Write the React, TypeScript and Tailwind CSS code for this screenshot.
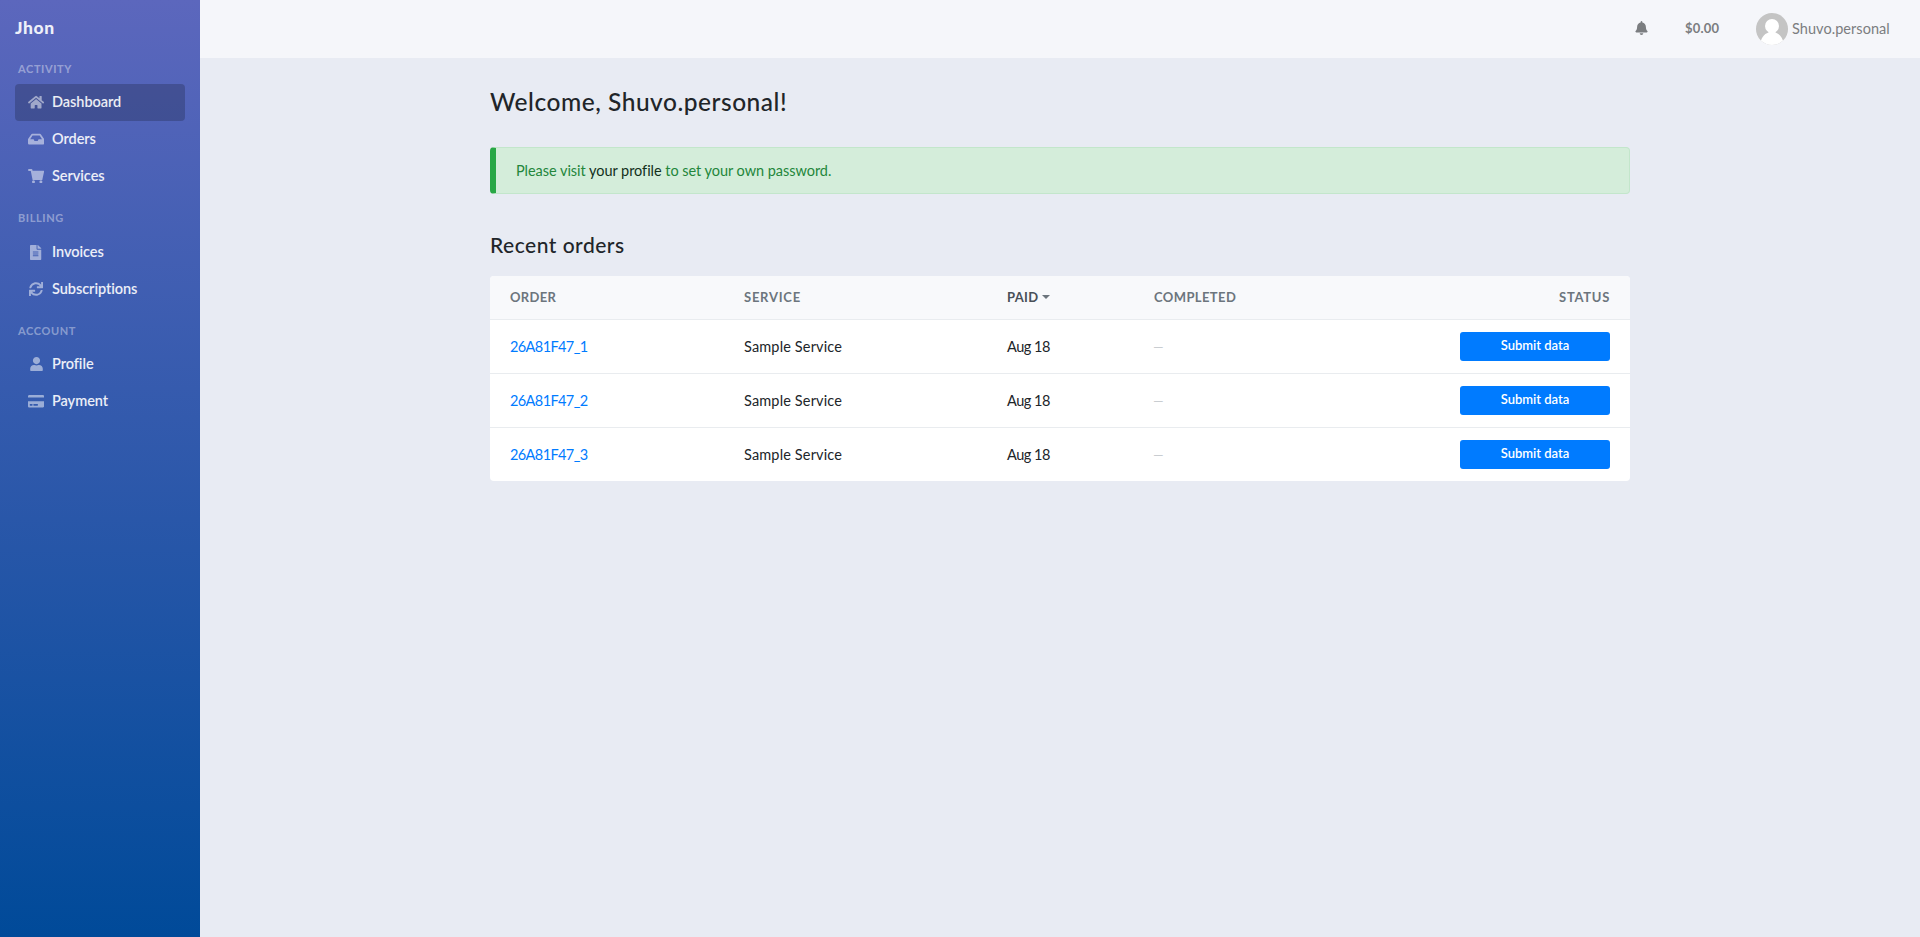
import React from "react";
import { FaHome, FaInbox, FaFileAlt, FaSync, FaUser, FaCreditCard, FaBell } from "react-icons/fa";

type IconComponent = React.ComponentType<{ className?: string }>;
type Item = { label: string; icon: IconComponent; active?: boolean; iconSize: string };
type Section = { title: string; items: Item[]; pad: string };

const wide = "h-[14.4px] w-[16.2px]";

function CartIcon({ className }: { className?: string }) {
  return (
    <svg className={className} viewBox="0 0 16 14.4" fill="currentColor">
      <path d="M.7 0h2.800c.4 0 .6.2.7.5l.3 1.300h10.800c.5 0 .8.4.7.8l-1.300 5.800-.5 2.500H4.500L2.700 1.900H.7A.7.7 0 0 1 0 1.200V.7C0 .3.3 0 .7 0z" />
      <circle cx="5.400" cy="12.800" r="1.500" />
      <circle cx="12.800" cy="12.800" r="1.500" />
    </svg>
  );
}

const sections: Section[] = [
  {
    title: "ACTIVITY",
    pad: "h-[26px]",
    items: [
      { label: "Dashboard", icon: FaHome, active: true, iconSize: wide },
      { label: "Orders", icon: FaInbox, iconSize: wide },
      { label: "Services", icon: CartIcon, iconSize: wide },
    ],
  },
  {
    title: "BILLING",
    pad: "h-[39px] pt-3",
    items: [
      { label: "Invoices", icon: FaFileAlt, iconSize: "h-[15px] w-[11.25px]" },
      { label: "Subscriptions", icon: FaSync, iconSize: "h-[14px] w-[14px]" },
    ],
  },
  {
    title: "ACCOUNT",
    pad: "h-[38px] pt-3",
    items: [
      { label: "Profile", icon: FaUser, iconSize: "h-[14.4px] w-[13px]" },
      { label: "Payment", icon: FaCreditCard, iconSize: wide },
    ],
  },
];

const orders = ["26A81F47_1", "26A81F47_2", "26A81F47_3"];

function Sidebar() {
  return (
    <aside className="flex w-[200px] shrink-0 flex-col bg-[linear-gradient(180deg,#5c67bd,#004a99)] px-[15px]">
      <div className="flex h-[58px] items-center pb-0.5 text-[17.5px] font-black tracking-[0.6px] text-[#eef0f9]">
        <span>Jhon</span>
      </div>
      {sections.map((s) => (
        <section key={s.title}>
          <h2 className={`${s.pad} pl-[3px] text-[11px] leading-[21px] font-bold tracking-[0.6px] text-white/40`}>{s.title}</h2>
          {s.items.map(({ label, icon: Icon, active, iconSize }) => (
            <a key={label} className={`flex h-[37px] items-center gap-2 rounded pb-px pl-[13px] text-[14.5px] font-semibold tracking-[-0.05px] text-white/90 ${active ? "bg-black/20" : ""}`}>
              <span className="flex w-4 justify-center text-white/50">
                <Icon className={`shrink-0 ${iconSize}`} />
              </span>
              <span>{label}</span>
            </a>
          ))}
        </section>
      ))}
    </aside>
  );
}

function Header() {
  return (
    <header className="flex h-[58px] items-center justify-end bg-[#f5f6fa] pr-[30px] text-[#7b7d80]">
      <FaBell className="mb-0.5 h-[14px] w-[13px]" />
      <span className="ml-[37px] w-[35px] text-[13px] font-bold tracking-[0.2px]">$0.00</span>
      <svg className="ml-[36px]" width="32" height="32" viewBox="0 0 32 32">
        <defs>
          <clipPath id="avatar"><circle cx="16" cy="16" r="16" /></clipPath>
        </defs>
        <g clipPath="url(#avatar)">
          <rect width="32" height="32" fill="#c4c4c4" />
          <circle cx="16" cy="13" r="7" fill="#fff" />
          <path d="M4 32c1-7 4-11 8.500-12.500v-3h7v3c4.500 1.500 7.500 5.500 8.500 12.500z" fill="#fff" />
        </g>
      </svg>
      <span className="ml-1 w-[98px] text-[14.5px] tracking-[0.05px]">Shuvo.personal</span>
    </header>
  );
}

export default function App() {
  return (
    <div className="flex h-[937px] bg-[#e8ebf3] font-['Lato',sans-serif] text-[#212529] [font-variant-ligatures:none]">
      <Sidebar />
      <div className="flex min-w-0 flex-1 flex-col">
        <Header />
        <main className="mx-auto w-[1140px]">
          <h1 className="mt-[26px] text-[24.5px] leading-[36px] font-medium tracking-[0.52px]">Welcome, Shuvo.personal!</h1>
          <div className="mt-[27px] flex h-[47px] items-center rounded border border-l-[6px] border-[#c3e6cb] border-l-[#28a745] bg-[#d4edda] pl-5 text-[14.5px] tracking-[-0.04px] text-[#23863b]">
            <p>
              Please visit <a className="text-[#12301a]">your profile</a> to set your own password.
            </p>
          </div>
          <h2 className="mt-[36px] text-[21px] leading-[30px] font-medium tracking-[0.5px]">Recent orders</h2>
          <div className="mt-[16px] overflow-hidden rounded bg-white">
            <table className="w-full table-fixed text-left text-[14.5px]">
              <colgroup>
                <col className="w-[234px]" />
                <col className="w-[263px]" />
                <col className="w-[147px]" />
                <col className="w-[200px]" />
                <col />
              </colgroup>
              <thead className="bg-[#f8f9fb] text-[13px] text-[#6c757d]">
                <tr className="h-[43px]">
                  <th className="pl-5 tracking-[0.35px]">ORDER</th>
                  <th className="pl-5 tracking-[0.75px]">SERVICE</th>
                  <th className="pl-5 tracking-[0.3px] text-[#495057]">
                    <span className="flex items-center gap-1">
                      PAID
                      <svg width="8" height="4" viewBox="0 0 8 4" fill="#6c757d"><path d="M0 0h8L4 4z" /></svg>
                    </span>
                  </th>
                  <th className="pl-5 tracking-[0.4px]">COMPLETED</th>
                  <th className="pr-5 text-right tracking-[0.7px]">STATUS</th>
                </tr>
              </thead>
              <tbody>
                {orders.map((id) => (
                  <tr key={id} className="h-[54px] border-t border-[#e9ecef]">
                    <td className="pt-px pl-5 tracking-[-0.6px] text-[#007bff]">{id}</td>
                    <td className="pt-px pl-5 tracking-[0.15px]">Sample Service</td>
                    <td className="pt-px pl-5 tracking-[-0.5px]">Aug 18</td>
                    <td className="pt-px pl-[18px] leading-5 text-[#c9cdd1]">
                      <span className="inline-block origin-left scale-x-150">–</span>
                    </td>
                    <td className="pr-5">
                      <button className="ml-auto block h-[29px] w-[150px] rounded-[3px] bg-[#007bff] pb-px text-[13px] font-semibold text-white">Submit data</button>
                    </td>
                  </tr>
                ))}
              </tbody>
            </table>
          </div>
        </main>
      </div>
    </div>
  );
}
